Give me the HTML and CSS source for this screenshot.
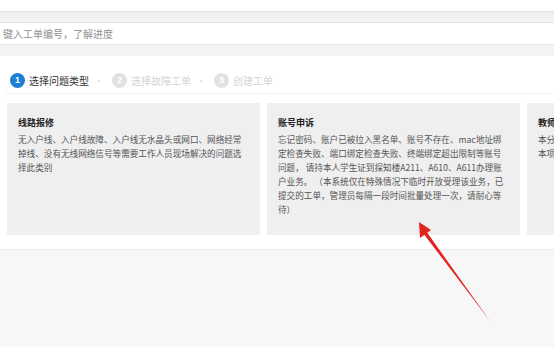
FILE: index.html
```html
<!DOCTYPE html>
<html lang="zh-CN">
<head>
<meta charset="utf-8">
<title>工单</title>
<link rel="stylesheet" href="styles.css">
</head>
<body>
<div class="top-gap"></div>
<div class="band"></div>
<div class="search"><span class="placeholder">键入工单编号，了解进度</span></div>
<div class="band2"></div>
<main class="content">
  <ol class="steps">
    <li class="step active"><span class="num">1</span><span class="label">选择问题类型</span></li>
    <li class="sep"></li>
    <li class="step"><span class="num">2</span><span class="label">选择故障工单</span></li>
    <li class="sep"></li>
    <li class="step"><span class="num">3</span><span class="label">创建工单</span></li>
  </ol>
  <div class="cards">
    <div class="card">
      <h3>线路报修</h3>
      <p>无入户线、入户线故障、入户线无水晶头或网口、网络经常<br>掉线、没有无线网络信号等需要工作人员现场解决的问题选<br>择此类别</p>
    </div>
    <div class="card">
      <h3>账号申诉</h3>
      <p>忘记密码、账户已被拉入黑名单、账号不存在、mac地址绑<br>定检查失败、端口绑定检查失败、终端绑定超出限制等账号<br>问题，&nbsp;请持本人学生证到探知楼A211、A610、A611办理账<br>户业务。&nbsp;（本系统仅在特殊情况下临时开放受理该业务，已<br>提交的工单，管理员每隔一段时间批量处理一次，请耐心等<br>待）</p>
    </div>
    <div class="card">
      <h3>教师报修</h3>
      <p>本分类适用于教职工<br>本项</p>
    </div>
  </div>
</main>
<div class="footer-area"></div>
<svg class="arrow" width="554" height="348" viewBox="0 0 554 348">
  <polygon points="490,321 423,233 426,231" fill="#e3231f"/>
  <polygon points="419,222 420,238 431,230" fill="#e3231f"/>
</svg>
</body>
</html>
```
FILE: styles.css
```css
html, body {
  margin: 0;
  padding: 0;
  background: #ffffff;
  font-family: "Noto Sans CJK SC", "Noto Sans", sans-serif;
  width: 554px;
  height: 348px;
  overflow: hidden;
  position: relative;
}
.top-gap { height: 11px; }
.band {
  height: 10px;
  border-top: 1px solid #e2e2e2;
  border-bottom: 1px solid #e2e2e2;
  background: linear-gradient(#eeeeee, #f6f6f6);
}
.search {
  height: 21px;
  display: flex;
  align-items: center;
  padding-left: 3px;
  border-bottom: 1px solid #e4e4e4;
}
.placeholder {
  font-size: 10px;
  color: #8f8f8f;
  line-height: 12px;
}
.band2 {
  height: 11px;
  background: #f4f4f4;
}
.content {
  padding: 17px 0 14px 7px;
  height: 162px;
  overflow: hidden;
}
.steps {
  list-style: none;
  margin: 0 0 9px -2px;
  padding: 0 0 5px 5px;
  display: flex;
  align-items: center;
  border-bottom: 1px solid #f2f2f2;
  height: 15px;
}
.step {
  display: flex;
  align-items: center;
  gap: 4px;
}
.num {
  width: 15px;
  height: 15px;
  border-radius: 50%;
  background: #e2e2e2;
  color: #fff;
  font-size: 9px;
  font-weight: bold;
  line-height: 15px;
  text-align: center;
  font-family: "Liberation Sans", sans-serif;
}
.label {
  font-size: 10px;
  color: #d4d4d4;
  line-height: 12px;
}
.step.active .num { background: #1b7fd3; }
.step.active .label { color: #333; }
.sep {
  width: 2px;
  height: 2px;
  background: #d8d8d8;
  border-radius: 50%;
  margin: 0 12px 0 9px;
}
.cards {
  display: flex;
  gap: 7px;
}
.card {
  flex: 0 0 253px;
  height: 132px;
  box-sizing: border-box;
  background: #efefef;
  padding: 13px 0 0 11px;
  overflow: hidden;
  white-space: nowrap;
}
.card h3 {
  margin: 0 0 2px;
  font-size: 9px;
  line-height: 14px;
  font-weight: bold;
  color: #222;
}
.card p {
  margin: 0;
  font-size: 8.6px;
  line-height: 14px;
  color: #555;
}
.footer-area {
  border-top: 1px solid #ececec;
  background: #f7f7f7;
  height: 97px;
}
.arrow {
  position: absolute;
  left: 0;
  top: 0;
  pointer-events: none;
}
```
